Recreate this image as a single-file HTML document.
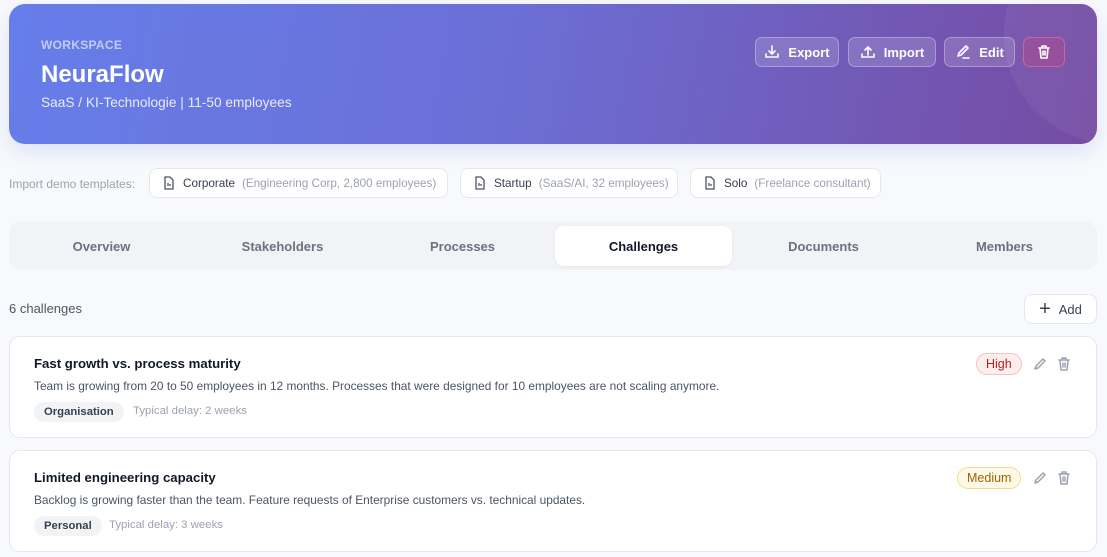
<!DOCTYPE html>
<html><head><meta charset="utf-8"><style>
*{box-sizing:border-box;margin:0;padding:0}
body{width:1107px;height:557px;overflow:hidden;background:#f8f9fc;font-family:"Liberation Sans",sans-serif;position:relative;color:#1f2937}
.hdr{position:absolute;left:9px;top:4px;width:1088px;height:140px;border-radius:16px;background:linear-gradient(100deg,#667eea 0%,#6b6fd6 45%,#764ba2 100%);box-shadow:0 8px 20px rgba(102,126,234,.18);overflow:hidden}
.hdr .circ{position:absolute;left:995px;top:-80px;width:220px;height:220px;border-radius:50%;background:rgba(255,255,255,.05)}
.ws{position:absolute;left:32px;top:34px;font-size:12px;font-weight:bold;color:rgba(255,255,255,.6);letter-spacing:.3px}
.nm{position:absolute;left:32px;top:57px;font-size:24px;font-weight:bold;color:#fff}
.sub{position:absolute;left:32px;top:91px;font-size:13.7px;color:rgba(255,255,255,.85)}
.btn{position:absolute;top:33px;height:30px;border:1px solid rgba(255,255,255,.3);background:rgba(255,255,255,.15);border-radius:7px;color:#fff;font-size:13px;font-weight:bold;display:flex;align-items:center;justify-content:center;gap:8px}
.btn svg{width:16px;height:16px;fill:none;stroke:#fff;stroke-width:1.6;stroke-linecap:round;stroke-linejoin:round}
.lbl{position:absolute;left:9px;top:177px;font-size:12px;color:#9ca3af}
.tpl{position:absolute;top:168px;height:30px;border:1px solid #e5e7eb;background:#fff;border-radius:8px;font-size:11.7px;color:#374151;display:flex;align-items:center;padding-left:12px;gap:7px;white-space:nowrap}
.tpl i{font-style:normal;color:#9ca3af}
.tpl svg{width:14px;height:14px;fill:none;stroke:#4b5563;stroke-width:1.3}
.tabs{position:absolute;left:9px;top:221px;width:1088px;height:49px;background:#f1f3f6;border-radius:12px}
.tab{position:absolute;top:5px;height:40px;width:177px;display:flex;align-items:center;justify-content:center;font-size:13px;font-weight:bold;color:#6b7280}
.tab.on{background:#fff;color:#111827;border-radius:9px;box-shadow:0 1px 3px rgba(0,0,0,.06)}
.cnt{position:absolute;left:9px;top:301px;font-size:13px;color:#4b5563}
.add{position:absolute;left:1024px;top:294px;width:73px;height:30px;border:1px solid #e5e7eb;background:#fff;border-radius:8px;font-size:13px;color:#374151;display:flex;align-items:center;justify-content:center;gap:8px}
.card{position:absolute;left:9px;width:1088px;height:102px;background:#fff;border:1px solid #e5e7eb;border-radius:11px}
.card h3{position:absolute;left:24px;top:19px;font-size:13.2px;font-weight:bold;color:#111827}
.card p{position:absolute;left:24px;top:42px;font-size:11.9px;color:#4b5563}
.tag{position:absolute;left:24px;top:65px;height:20px;padding:0 10px;border-radius:10px;background:#f1f3f5;font-size:11.3px;font-weight:bold;color:#374151;line-height:20px}
.dl{position:absolute;top:68px;font-size:11.4px;color:#9ca3af}
.pill{position:absolute;top:16px;height:22px;border-radius:11px;font-size:12.5px;line-height:20px;padding:0 9px}
.ic{position:absolute;top:19px;width:16px;height:16px;fill:none;stroke:#9ca3af;stroke-width:1.5;stroke-linecap:round;stroke-linejoin:round}
</style></head><body>
<div class="hdr"><div class="circ"></div>
<div class="ws">WORKSPACE</div><div class="nm">NeuraFlow</div><div class="sub">SaaS / KI-Technologie | 11-50 employees</div>
<div class="btn" style="left:746px;width:84px"><svg viewBox="0 0 16 16"><path d="M8 2v8M5 7l3 3 3-3M2 10v3h12v-3"/></svg>Export</div>
<div class="btn" style="left:839px;width:88px"><svg viewBox="0 0 16 16"><path d="M8 11V3M5 6l3-3 3 3M2 10v3h12v-3"/></svg>Import</div>
<div class="btn" style="left:935px;width:71px"><svg viewBox="0 0 16 16"><path d="M3 12l1-3 7-7 2 2-7 7zM8 14h6"/></svg>Edit</div>
<div class="btn" style="left:1014px;width:42px;background:rgba(200,70,130,.35);border-color:rgba(255,140,170,.4)"><svg viewBox="0 0 16 16"><path d="M3 4h10M6 4V2h4v2M4 4l1 10h6l1-10M7 7v4M9 7v4"/></svg></div>
</div>
<div class="lbl">Import demo templates:</div>
<div class="tpl" style="left:149px;width:299px"><svg viewBox="0 0 14 14"><path d="M3 1h5l3 3v9H3zM6 10V7M8 10V8"/></svg>Corporate <i>(Engineering Corp, 2,800 employees)</i></div>
<div class="tpl" style="left:460px;width:218px"><svg viewBox="0 0 14 14"><path d="M3 1h5l3 3v9H3zM6 10V7M8 10V8"/></svg>Startup <i>(SaaS/AI, 32 employees)</i></div>
<div class="tpl" style="left:690px;width:191px"><svg viewBox="0 0 14 14"><path d="M3 1h5l3 3v9H3zM6 10V7M8 10V8"/></svg>Solo <i>(Freelance consultant)</i></div>
<div class="tabs">
<div class="tab" style="left:4px">Overview</div><div class="tab" style="left:185px">Stakeholders</div><div class="tab" style="left:365px">Processes</div><div class="tab on" style="left:546px">Challenges</div><div class="tab" style="left:726px">Documents</div><div class="tab" style="left:907px">Members</div>
</div>
<div class="cnt">6 challenges</div>
<div class="add"><span style="font-size:20px;font-weight:normal;line-height:1">+</span>Add</div>
<div class="card" style="top:336px">
<h3>Fast growth vs. process maturity</h3>
<p>Team is growing from 20 to 50 employees in 12 months. Processes that were designed for 10 employees are not scaling anymore.</p>
<div class="tag">Organisation</div><div class="dl" style="left:123px">Typical delay: 2 weeks</div>
<div class="pill" style="left:966px;background:#fdeeee;border:1px solid #f5c2c2;color:#b91c1c">High</div>
<svg class="ic" style="left:1022px" viewBox="0 0 16 16"><path d="M3 13l1-3 7-7 2 2-7 7z"/></svg>
<svg class="ic" style="left:1046px" viewBox="0 0 16 16"><path d="M3 4h10M6 4V2h4v2M4 4l1 10h6l1-10M7 7v4M9 7v4"/></svg>
</div>
<div class="card" style="top:450px">
<h3>Limited engineering capacity</h3>
<p>Backlog is growing faster than the team. Feature requests of Enterprise customers vs. technical updates.</p>
<div class="tag">Personal</div><div class="dl" style="left:99px">Typical delay: 3 weeks</div>
<div class="pill" style="left:947px;background:#fef8e6;border:1px solid #f5dc8c;color:#a16207">Medium</div>
<svg class="ic" style="left:1022px" viewBox="0 0 16 16"><path d="M3 13l1-3 7-7 2 2-7 7z"/></svg>
<svg class="ic" style="left:1046px" viewBox="0 0 16 16"><path d="M3 4h10M6 4V2h4v2M4 4l1 10h6l1-10M7 7v4M9 7v4"/></svg>
</div>
</body></html>
